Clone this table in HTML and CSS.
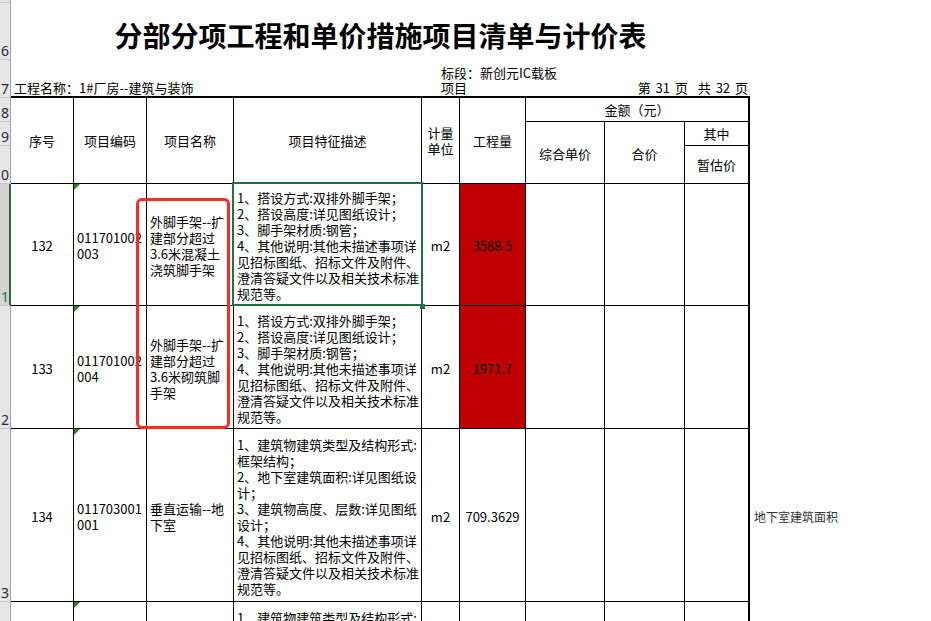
FILE: index.html
```html
<!DOCTYPE html>
<html lang="zh-CN">
<head>
<meta charset="utf-8">
<title>分部分项工程和单价措施项目清单与计价表</title>
<link rel="stylesheet" href="styles.css">
</head>
<body>
<div class="sheet">
  <!-- row 5 (sliver) -->
  <div class="rh"></div><div class="blank cs10"></div>

  <!-- row 6: title -->
  <div class="rh"><span>6</span></div>
  <div class="title cs9">分部分项工程和单价措施项目清单与计价表</div>
  <div class="blank"></div>

  <!-- row 7: info -->
  <div class="rh"><span>7</span></div>
  <div class="info proj cs4">工程名称：1#厂房--建筑与装饰</div>
  <div class="info bid cs3"><div>标段：新创元IC载板<br>项目</div></div>
  <div class="info page cs2">第 31 页  共 32 页</div>
  <div class="blank"></div>

  <!-- header rows -->
  <div class="rh"><span>8</span></div>
  <div class="c ctr rs3">序号</div>
  <div class="c ctr rs3">项目编码</div>
  <div class="c ctr rs3">项目名称</div>
  <div class="c ctr rs3">项目特征描述</div>
  <div class="c ctr rs3"><div>计量<br>单位</div></div>
  <div class="c ctr rs3">工程量</div>
  <div class="c ctr cs3 last">金额（元）</div>
  <div class="blank"></div>

  <div class="rh"><span>9</span></div>
  <div class="c ctr rs2 hdlow">综合单价</div>
  <div class="c ctr rs2 hdlow">合价</div>
  <div class="c ctr last">其中</div>
  <div class="blank"></div>

  <div class="rh"><span>0</span></div>
  <div class="c ctr last">暂估价</div>
  <div class="blank"></div>

  <!-- item 132 -->
  <div class="rh selrow"><span>1</span></div>
  <div class="c ctr body">132</div>
  <div class="c lft body code"><div>011701002<br>003</div></div>
  <div class="c lft body"><div>外脚手架--扩<br>建部分超过<br>3.6米混凝土<br>浇筑脚手架</div></div>
  <div class="c lft body sel"><div>1、搭设方式:双排外脚手架；<br>2、搭设高度:详见图纸设计；<br>3、脚手架材质:钢管；<br>4、其他说明:其他未描述事项详<br>见招标图纸、招标文件及附件、<br>澄清答疑文件以及相关技术标准<br>规范等。</div></div>
  <div class="c ctr body">m2</div>
  <div class="c ctr body red">3588.5</div>
  <div class="c"></div>
  <div class="c"></div>
  <div class="c last"></div>
  <div class="blank"></div>

  <!-- item 133 -->
  <div class="rh"><span>2</span></div>
  <div class="c ctr body">133</div>
  <div class="c lft body code"><div>011701002<br>004</div></div>
  <div class="c lft body"><div>外脚手架--扩<br>建部分超过<br>3.6米砌筑脚<br>手架</div></div>
  <div class="c lft body"><div>1、搭设方式:双排外脚手架；<br>2、搭设高度:详见图纸设计；<br>3、脚手架材质:钢管；<br>4、其他说明:其他未描述事项详<br>见招标图纸、招标文件及附件、<br>澄清答疑文件以及相关技术标准<br>规范等。</div></div>
  <div class="c ctr body">m2</div>
  <div class="c ctr body red">1971.7</div>
  <div class="c"></div>
  <div class="c"></div>
  <div class="c last"></div>
  <div class="blank"></div>

  <!-- item 134 -->
  <div class="rh"><span>3</span></div>
  <div class="c ctr body">134</div>
  <div class="c lft body code"><div>011703001<br>001</div></div>
  <div class="c lft body"><div>垂直运输--地<br>下室</div></div>
  <div class="c lft body"><div>1、建筑物建筑类型及结构形式:<br>框架结构；<br>2、地下室建筑面积:详见图纸设<br>计；<br>3、建筑物高度、层数:详见图纸<br>设计；<br>4、其他说明:其他未描述事项详<br>见招标图纸、招标文件及附件、<br>澄清答疑文件以及相关技术标准<br>规范等。</div></div>
  <div class="c ctr body">m2</div>
  <div class="c ctr body">709.3629</div>
  <div class="c"></div>
  <div class="c"></div>
  <div class="c last"></div>
  <div class="note">地下室建筑面积</div>

  <!-- next item (cut off) -->
  <div class="rh"><span>4</span></div>
  <div class="c"></div>
  <div class="c code"></div>
  <div class="c"></div>
  <div class="c lft body"><div>1、建筑物建筑类型及结构形式:<br>框架结构；<br>2、地上建筑面积:详见图纸设<br>计；<br>3、建筑物高度、层数:详见图纸<br>设计；<br>4、其他说明:其他未描述事项详<br>见招标图纸、招标文件及附件、<br>澄清答疑文件以及相关技术标准<br>规范等。</div></div>
  <div class="c"></div>
  <div class="c"></div>
  <div class="c"></div>
  <div class="c"></div>
  <div class="c last"></div>
  <div class="blank"></div>

  <div class="mark"></div>
</div>
</body>
</html>
```

FILE: styles.css
```css
html, body {
  margin: 0;
  padding: 0;
  background: #ffffff;
  overflow: hidden;
}

body {
  width: 931px;
  height: 621px;
  font-family: "Noto Sans CJK SC", "Noto Sans", sans-serif;
  font-size: 13px;
  color: #000;
}

.sheet {
  position: relative;
  display: grid;
  grid-template-columns: 11px 63px 73px 87px 188px 38px 66px 79px 80px 65px 1fr;
  grid-template-rows: 3px 57px 38px 24px 24px 38px 122px 123px 173px 173px;
  width: 931px;
}

.sheet > div {
  box-sizing: border-box;
  min-width: 0;
  min-height: 0;
}

/* row headers */
.rh {
  background: #e6e6e6;
  border-right: 1px solid #a3a3a3;
  border-bottom: 1px solid #c6c6c6;
  display: flex;
  align-items: flex-end;
  overflow: hidden;
  font-family: "Noto Sans", sans-serif;
  font-size: 14px;
  line-height: 14px;
  color: #1f2a40;
  padding-left: 1px;
  padding-bottom: 1px;
}

.selrow {
  background: #d3d3d3;
  border-right: 2px solid #217346;
  color: #217346;
}

/* spans */
.cs2 { grid-column: span 2; }
.cs3 { grid-column: span 3; }
.cs4 { grid-column: span 4; }
.cs9 { grid-column: span 9; }
.cs10 { grid-column: span 10; }
.rs2 { grid-row: span 2; }
.rs3 { grid-row: span 3; }

/* title & info */
.title {
  display: flex;
  align-items: center;
  justify-content: center;
  padding-top: 7px;
  font-size: 28px;
  font-weight: 700;
  line-height: 30px;
  white-space: nowrap;
}

.info {
  display: flex;
  align-items: flex-end;
  border-bottom: 2px solid #000;
  line-height: 15px;
  white-space: nowrap;
  padding-bottom: 1px;
}

.proj { padding-left: 3px; }
.bid { padding-left: 19px; }
.page {
  justify-content: flex-end;
  white-space: pre;
  padding-right: 2px;
  word-spacing: 2px;
}

/* table cells */
.c {
  position: relative;
  display: flex;
  align-items: center;
  border-right: 1px solid #000;
  border-bottom: 1px solid #000;
  line-height: 16px;
  white-space: nowrap;
}

.ctr {
  justify-content: center;
  text-align: center;
}

.lft {
  padding-left: 3px;
  justify-content: flex-start;
}

.body { padding-top: 3px; }
.hdlow { padding-top: 2px; }

.last { border-right-width: 2px; }

.red { background: #c00000; }

.code::before {
  content: "";
  position: absolute;
  left: 0;
  top: 0;
  border-top: 6px solid #1c8a1c;
  border-right: 6px solid transparent;
}

.sel::after {
  content: "";
  position: absolute;
  left: -2px;
  top: -2px;
  right: -2px;
  bottom: -1px;
  border: 2px solid #217346;
  pointer-events: none;
}

.sel::before {
  content: "";
  position: absolute;
  right: -4px;
  bottom: -4px;
  width: 5px;
  height: 5px;
  background: #217346;
  z-index: 2;
}

.note {
  display: flex;
  align-items: center;
  padding-left: 4px;
  padding-top: 2px;
  font-size: 12px;
  color: #333;
  white-space: nowrap;
}

/* red annotation rectangle drawn over the sheet */
.mark {
  position: absolute;
  left: 136px;
  top: 198px;
  width: 94px;
  height: 231px;
  box-sizing: border-box;
  border: 3px solid #ff2a20;
  border-radius: 6px;
  pointer-events: none;
}
```
